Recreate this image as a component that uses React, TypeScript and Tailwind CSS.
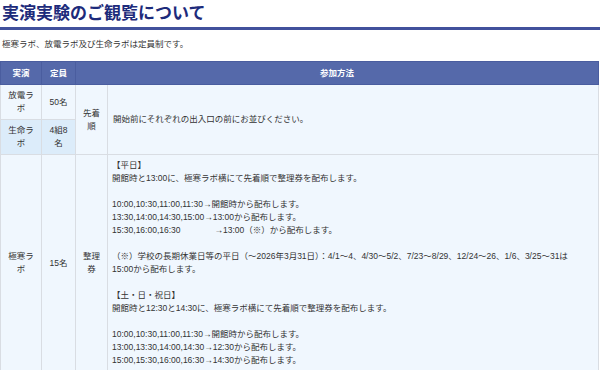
import React from "react";

const font = { fontFamily: '"Liberation Sans", "Noto Sans CJK JP", sans-serif' };

// 極寒ラボの整理券スケジュール（空文字は空行）
const coldLines: string[] = [
  "【平日】",
  "開館時と13:00に、極寒ラボ横にて先着順で整理券を配布します。",
  "",
  "10:00,10:30,11:00,11:30→開館時から配布します。",
  "13:30,14:00,14:30,15:00→13:00から配布します。",
  "15:30,16:00,16:30\u3000\u3000\u3000\u3000→13:00（※）から配布します。",
  "",
  "（※）学校の長期休業日等の平日（～2026年3月31日）：4/1～4、4/30～5/2、7/23～8/29、12/24～26、1/6、3/25～31は",
  "15:00から配布します。",
  "",
  "【土・日・祝日】",
  "開館時と12:30と14:30に、極寒ラボ横にて先着順で整理券を配布します。",
  "",
  "10:00,10:30,11:00,11:30→開館時から配布します。",
  "13:00,13:30,14:00,14:30→12:30から配布します。",
  "15:00,15:30,16:00,16:30→14:30から配布します。",
];

const th = "bg-[#5569aa] text-white font-bold text-center border border-[#4a5d9f] pt-[6px] pb-[5px] leading-[11px]";
const td = "border border-[#d9dde3] align-middle leading-[13px]";

export default function App() {
  return (
    <div className="w-[600px] h-[370px] overflow-hidden bg-white text-[#333]" style={font}>
      {/* Title */}
      <h2 className="text-[17px] font-bold leading-[22px] text-[#1d2b7b] pt-[3px] pb-[2px] px-[2px] border-b-[3px] border-[#41519c]">
        実演実験のご観覧について
      </h2>
      <p className="mt-[8px] px-[2px] text-[8.5px] leading-[13px]">極寒ラボ、放電ラボ及び生命ラボは定員制です。</p>

      {/* Table */}
      <table className="mt-[10px] w-[599px] border-collapse table-fixed text-[8.5px]">
        <colgroup>
          <col className="w-[41px]" />
          <col className="w-[34px]" />
          <col className="w-[32px]" />
          <col />
        </colgroup>
        <thead>
          <tr className="border-t border-[#d9dde3]">
            <th className={th}>実演</th>
            <th className={th}>定員</th>
            <th className={th} colSpan={2}>参加方法</th>
          </tr>
        </thead>
        <tbody className="bg-[#f0f7fe]">
          <tr>
            <td className={`${td} text-center py-[4px]`}>放電ラ<br />ボ</td>
            <td className={`${td} text-center`}>50名</td>
            <td className={`${td} text-center`} rowSpan={2}>先着<br />順</td>
            <td className={`${td} px-[5px]`} rowSpan={2}>開始前にそれぞれの出入口の前にお並びください。</td>
          </tr>
          <tr>
            <td className={`${td} text-center py-[4px] bg-[#dcecfa]`}>生命ラ<br />ボ</td>
            <td className={`${td} text-center bg-[#dcecfa]`}>4組8<br />名</td>
          </tr>
          <tr>
            <td className={`${td} text-center`}>極寒ラ<br />ボ</td>
            <td className={`${td} text-center`}>15名</td>
            <td className={`${td} text-center`}>整理<br />券</td>
            <td className={`${td} px-[4px] py-[4px]`}>
              {coldLines.map((line, i) =>
                line ? (
                  <div key={i} className="whitespace-pre">{line}</div>
                ) : (
                  <div key={i} className="h-[13px]" />
                )
              )}
            </td>
          </tr>
        </tbody>
      </table>
    </div>
  );
}
